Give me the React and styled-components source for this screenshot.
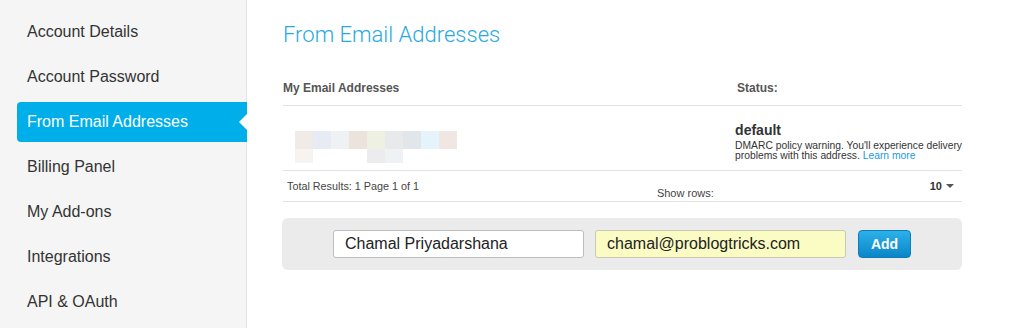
import React from 'react';
import styled, { createGlobalStyle } from 'styled-components';

const GlobalStyle = createGlobalStyle`
  html, body {
    margin: 0;
    padding: 0;
    background: #fff;
    font-family: "Liberation Sans", Arial, sans-serif;
    color: #333;
  }
`;

const Page = styled.div`
  display: flex;
  width: 1027px;
  height: 328px;
  overflow: hidden;
`;

const Sidebar = styled.nav`
  width: 247px;
  flex-shrink: 0;
  background: #f5f5f5;
  border-right: 1px solid #e4e4e4;
  padding: 12px 0 0 17px;
  box-sizing: border-box;
  display: flex;
  flex-direction: column;
  gap: 5px;
`;

const NavItem = styled.a`
  position: relative;
  display: flex;
  align-items: center;
  height: 40px;
  padding-left: 10px;
  margin-right: ${p => (p.$active ? '-1px' : '0')};
  font-size: 16px;
  color: ${p => (p.$active ? '#fff' : '#333')};
  background: ${p => (p.$active ? '#00aee9' : 'transparent')};
  border-radius: 4px 0 0 4px;
  text-decoration: none;

  &::after {
    content: '';
    display: ${p => (p.$active ? 'block' : 'none')};
    position: absolute;
    right: 0;
    top: 12px;
    border-style: solid;
    border-width: 8px 8px 8px 0;
    border-color: transparent #fff transparent transparent;
  }
`;

const Main = styled.main`
  flex: 1;
  padding: 21px 0 0 36px;
  box-sizing: border-box;
`;

const Title = styled.h1`
  margin: 0;
  font-family: Roboto, "Liberation Sans", sans-serif;
  font-weight: 300;
  font-size: 22px;
  line-height: 28px;
  color: #29a9e1;
`;

const Table = styled.div`
  width: 679px;
  margin-top: 22px;
`;

const Row = styled.div`
  display: flex;
  height: ${p => p.$h}px;
  border-bottom: 1px solid #e3e3e3;
`;

const EmailCell = styled.div`
  width: 454px;
  display: flex;
  align-items: ${p => p.$align || 'center'};
  padding: ${p => p.$pad || '0'};
  box-sizing: border-box;
`;

const StatusCell = styled.div`
  flex: 1;
  display: flex;
  flex-direction: column;
  justify-content: center;
`;

const HeadText = styled.span`
  font-size: 12px;
  font-weight: bold;
  color: #555;
`;

const StatusName = styled.div`
  font-size: 14px;
  font-weight: bold;
  color: #333;
  margin: 7px 0 3px;
`;

const Warning = styled.div`
  font-size: 10.3px;
  line-height: 10px;
  color: #333;
  white-space: nowrap;
`;

const LearnMore = styled.a`
  color: #1a9ad6;
  text-decoration: none;
`;

const Blur = styled.svg`
  display: block;
  margin-left: 12px;
`;

const Footer = styled.div`
  display: flex;
  height: 30px;
  border-bottom: 1px solid #e3e3e3;
  font-size: 11px;
  color: #444;
`;

const Total = styled.span`
  margin: 9px 0 0 4px;
  font-size: 10.8px;
`;

const ShowRows = styled.span`
  margin: 16px 0 0 auto;
`;

const RowCount = styled.span`
  display: flex;
  align-items: center;
  gap: 4px;
  margin: 9px 8px 0 216px;
  height: 12px;
  font-weight: bold;
  color: #333;
`;

const Caret = styled.span`
  display: inline-block;
  border-style: solid;
  border-width: 4px 4px 0 4px;
  border-color: #555 transparent transparent transparent;
`;

const AddBox = styled.form`
  width: 680px;
  height: 52px;
  margin-top: 16px;
  margin-left: -1px;
  background: #ebebeb;
  border-radius: 6px;
  display: flex;
  align-items: center;
  justify-content: center;
  gap: 11px;
`;

const Input = styled.input`
  width: 251px;
  height: 28px;
  box-sizing: border-box;
  padding: 0 11px;
  font-family: "Liberation Sans", Arial, sans-serif;
  font-size: 16px;
  color: #222;
  background: ${p => (p.$filled ? '#fafcc4' : '#fff')};
  border: 1px solid ${p => (p.$filled ? '#c9c9b4' : '#bdbdbd')};
  border-radius: 3px;
  outline: none;
`;

const AddButton = styled.button`
  width: 53px;
  height: 28px;
  margin-left: 1px;
  font-family: "Liberation Sans", Arial, sans-serif;
  font-size: 14px;
  font-weight: bold;
  color: #fff;
  background: linear-gradient(#2db0ea, #0a86c7);
  border: 1px solid #0a7dbb;
  border-radius: 4px;
  cursor: pointer;
`;

const navItems = [
  'Account Details',
  'Account Password',
  'From Email Addresses',
  'Billing Panel',
  'My Add-ons',
  'Integrations',
  'API & OAuth',
];

// pixelated (blurred) address in the screenshot
const blurTop = ['#f0ebe6', '#e6ebf4', '#eef2f5', '#ece4dc', '#eef0e2', '#e8e9eb', '#e1e6ea', '#e5f3fc', '#f0e7e3'];
const blurBottom = { 0: '#f6f3f1', 4: '#ecebee', 5: '#eef2f5' };

const BlurredAddress = () => (
  <Blur width="162" height="32" viewBox="0 0 162 32">
    {blurTop.map((c, i) => (
      <rect key={i} x={i * 18} y="0" width="18" height="18" fill={c} />
    ))}
    {Object.entries(blurBottom).map(([i, c]) => (
      <rect key={'b' + i} x={i * 18} y="18" width="18" height="14" fill={c} />
    ))}
  </Blur>
);

export default function App() {
  return (
    <Page>
      <GlobalStyle />
      <Sidebar>
        {navItems.map(item => (
          <NavItem key={item} $active={item === 'From Email Addresses'}>
            {item}
          </NavItem>
        ))}
      </Sidebar>
      <Main>
        <Title>From Email Addresses</Title>
        <Table>
          <Row $h={34}>
            <EmailCell>
              <HeadText>My Email Addresses</HeadText>
            </EmailCell>
            <StatusCell>
              <HeadText>Status:</HeadText>
            </StatusCell>
          </Row>
          <Row $h={64}>
            <EmailCell $align="flex-start" $pad="25px 0 0">
              <BlurredAddress />
            </EmailCell>
            <StatusCell>
              <StatusName>default</StatusName>
              <Warning>
                DMARC policy warning. You'll experience delivery
                <br />
                problems with this address. <LearnMore href="#">Learn more</LearnMore>
              </Warning>
            </StatusCell>
          </Row>
          <Footer>
            <Total>Total Results: 1 Page 1 of 1</Total>
            <ShowRows>Show rows:</ShowRows>
            <RowCount>
              10 <Caret />
            </RowCount>
          </Footer>
        </Table>
        <AddBox onSubmit={e => e.preventDefault()}>
          <Input defaultValue="Chamal Priyadarshana" />
          <Input $filled defaultValue="chamal@problogtricks.com" />
          <AddButton type="submit">Add</AddButton>
        </AddBox>
      </Main>
    </Page>
  );
}
